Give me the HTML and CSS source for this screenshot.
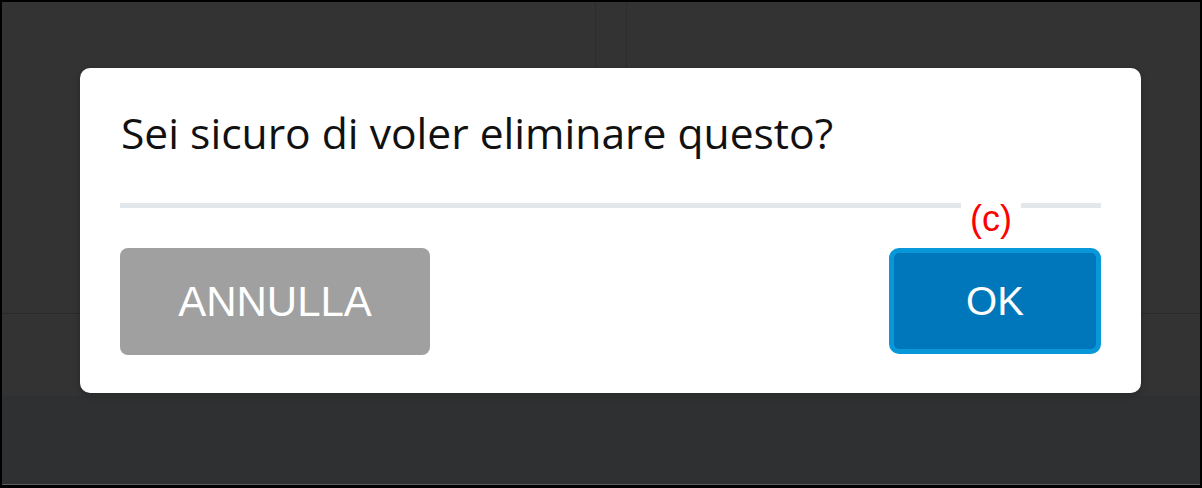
FILE: index.html
```html
<!DOCTYPE html>
<html lang="it">
<head>
<meta charset="utf-8">
<title>Conferma</title>
<link rel="stylesheet" href="styles.css">
</head>
<body>
<div class="frame">
  <div class="top">
    <div class="col col-a"></div>
    <div class="col col-b"></div>
    <div class="col col-c"></div>
  </div>
  <div class="mid"></div>
  <div class="bottom"></div>

  <div class="modal" role="dialog">
    <p class="modal-title">Sei sicuro di voler eliminare questo?</p>
    <hr class="modal-divider">
    <div class="modal-actions">
      <button class="btn btn-cancel">ANNULLA</button>
      <button class="btn btn-ok">OK</button>
    </div>
    <span class="note-label">(c)</span>
  </div>
</div>
</body>
</html>
```

FILE: styles.css
```css
html, body {
  margin: 0;
  padding: 0;
  background: #000;
}

.frame {
  position: relative;
  margin: 2px 2px 0 2px;
  width: 1198px;
  height: 482px;
  border-bottom: 1px solid #5c5c5c;
  display: flex;
  flex-direction: column;
  background: #333333;
}

.top {
  height: 311px;
  display: flex;
  border-bottom: 1px solid #2a2a2a;
}

.col {
  height: 100%;
}

.col-a {
  width: 593px;
  border-right: 1px solid #2c2c2c;
}

.col-b {
  width: 30px;
  border-right: 1px solid #2c2c2c;
}

.col-c {
  flex: 1;
}

.mid {
  height: 82px;
  background: #333333;
}

.bottom {
  flex: 1;
  background: #2f3031;
}

.modal {
  position: absolute;
  left: 78px;
  top: 66px;
  width: 1061px;
  height: 325px;
  box-sizing: border-box;
  padding: 35px 40px 38px 40px;
  background: #ffffff;
  border-radius: 10px;
  box-shadow: 0 2px 6px rgba(0, 0, 0, 0.25);
  display: flex;
  flex-direction: column;
}

.modal-title {
  margin: 0 0 0 1px;
  font-family: "Open Sans", "Noto Sans", sans-serif;
  font-size: 42.6px;
  line-height: 58px;
  color: #111111;
  font-weight: 400;
}

.modal-divider {
  margin: 42px 0 0 0;
  border: 0;
  height: 5px;
  background: #e2e7eb;
}

.modal-actions {
  margin-top: 40px;
  display: flex;
  justify-content: space-between;
  align-items: flex-start;
}

.btn {
  font-family: "Liberation Sans", Arial, sans-serif;
  font-size: 42px;
  color: #ffffff;
  border: 0;
  padding: 0;
  cursor: pointer;
}

.btn-cancel {
  width: 310px;
  height: 107px;
  background: #a0a0a0;
  border-radius: 8px;
}

.btn-ok {
  width: 212px;
  height: 106px;
  background: #0077ba;
  border: 5px solid #0897d8;
  border-radius: 10px;
  font-size: 40px;
}

.note-label {
  position: absolute;
  left: 881px;
  top: 130px;
  width: 60px;
  text-align: center;
  background: #ffffff;
  color: #ff0000;
  font-family: "Liberation Sans", Arial, sans-serif;
  font-size: 36px;
  line-height: 41px;
}
```
